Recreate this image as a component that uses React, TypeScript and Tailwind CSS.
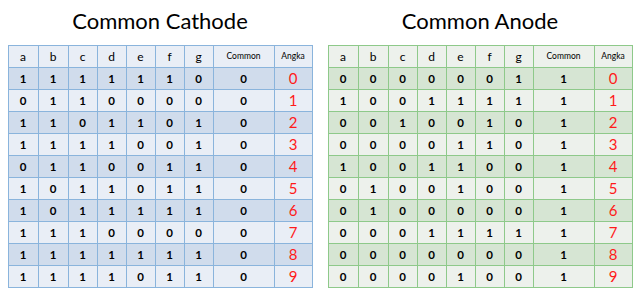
const CATHODE = [
  '1111110',
  '0110000',
  '1101101',
  '1111001',
  '0110011',
  '1011011',
  '1011111',
  '1110000',
  '1111111',
  '1111011'
];

const ANODE = [
  '0000001',
  '1001111',
  '0010010',
  '0000110',
  '1001100',
  '0100100',
  '0100000',
  '0001111',
  '0000000',
  '0000100'
];

const HEADS = ['a', 'b', 'c', 'd', 'e', 'f', 'g'];
const WIDTHS = ['w-[30px]', 'w-[30px]', 'w-[29px]', 'w-[29px]', 'w-[29px]', 'w-[29px]', 'w-[29px]'];

type Theme = {
  border: string;
  dark: string;
  light: string;
};

const BLUE: Theme = { border: 'border-[#8ab4dc]', dark: 'bg-[#d0dcec]', light: 'bg-[#e9eef6]' };
const GREEN: Theme = { border: 'border-[#8ec98a]', dark: 'bg-[#d6e5d3]', light: 'bg-[#edf1ec]' };

function SegTable({ title, rows, common, theme }: { title: string; rows: string[]; common: string; theme: Theme }) {
  return (
    <div className="flex w-[304px] flex-col items-center">
      <h2 className="h-[45px] pt-[7px] text-[22px] leading-[28px] text-black [font-family:Lato,sans-serif]">
        {title}
      </h2>
      <table className={`w-[304px] table-fixed border-collapse border ${theme.border} text-center text-black [font-family:Lato,sans-serif]`}>
        <thead>
          <tr className={`h-[22px] ${theme.light}`}>
            {HEADS.map((h, i) => (
              <th key={h} className={`${WIDTHS[i]} border ${theme.border} p-0 text-[12px] font-normal`}>
                {h}
              </th>
            ))}
            <th className={`w-[61px] border ${theme.border} p-0 text-[8.5px] font-normal`}>Common</th>
            <th className={`w-[38px] border ${theme.border} p-0 text-[8.5px] font-normal`}>Angka</th>
          </tr>
        </thead>
        <tbody>
          {rows.map((r, n) => (
            <tr key={n} className={`h-[22px] ${n % 2 === 0 ? theme.dark : theme.light}`}>
              {r.split('').map((v, i) => (
                <td key={i} className={`border ${theme.border} p-0 text-[11.5px] font-bold`}>
                  {v}
                </td>
              ))}
              <td className={`border ${theme.border} p-0 text-[11.5px] font-bold`}>{common}</td>
              <td className={`border ${theme.border} p-0 text-[15px] leading-none text-[#ff1a1a]`}>{n}</td>
            </tr>
          ))}
        </tbody>
      </table>
    </div>
  );
}

export default function App() {
  return (
    <div className="flex h-[296px] w-[640px] gap-4 bg-white px-2">
      <SegTable title="Common Cathode" rows={CATHODE} common="0" theme={BLUE} />
      <SegTable title="Common Anode" rows={ANODE} common="1" theme={GREEN} />
    </div>
  );
}
